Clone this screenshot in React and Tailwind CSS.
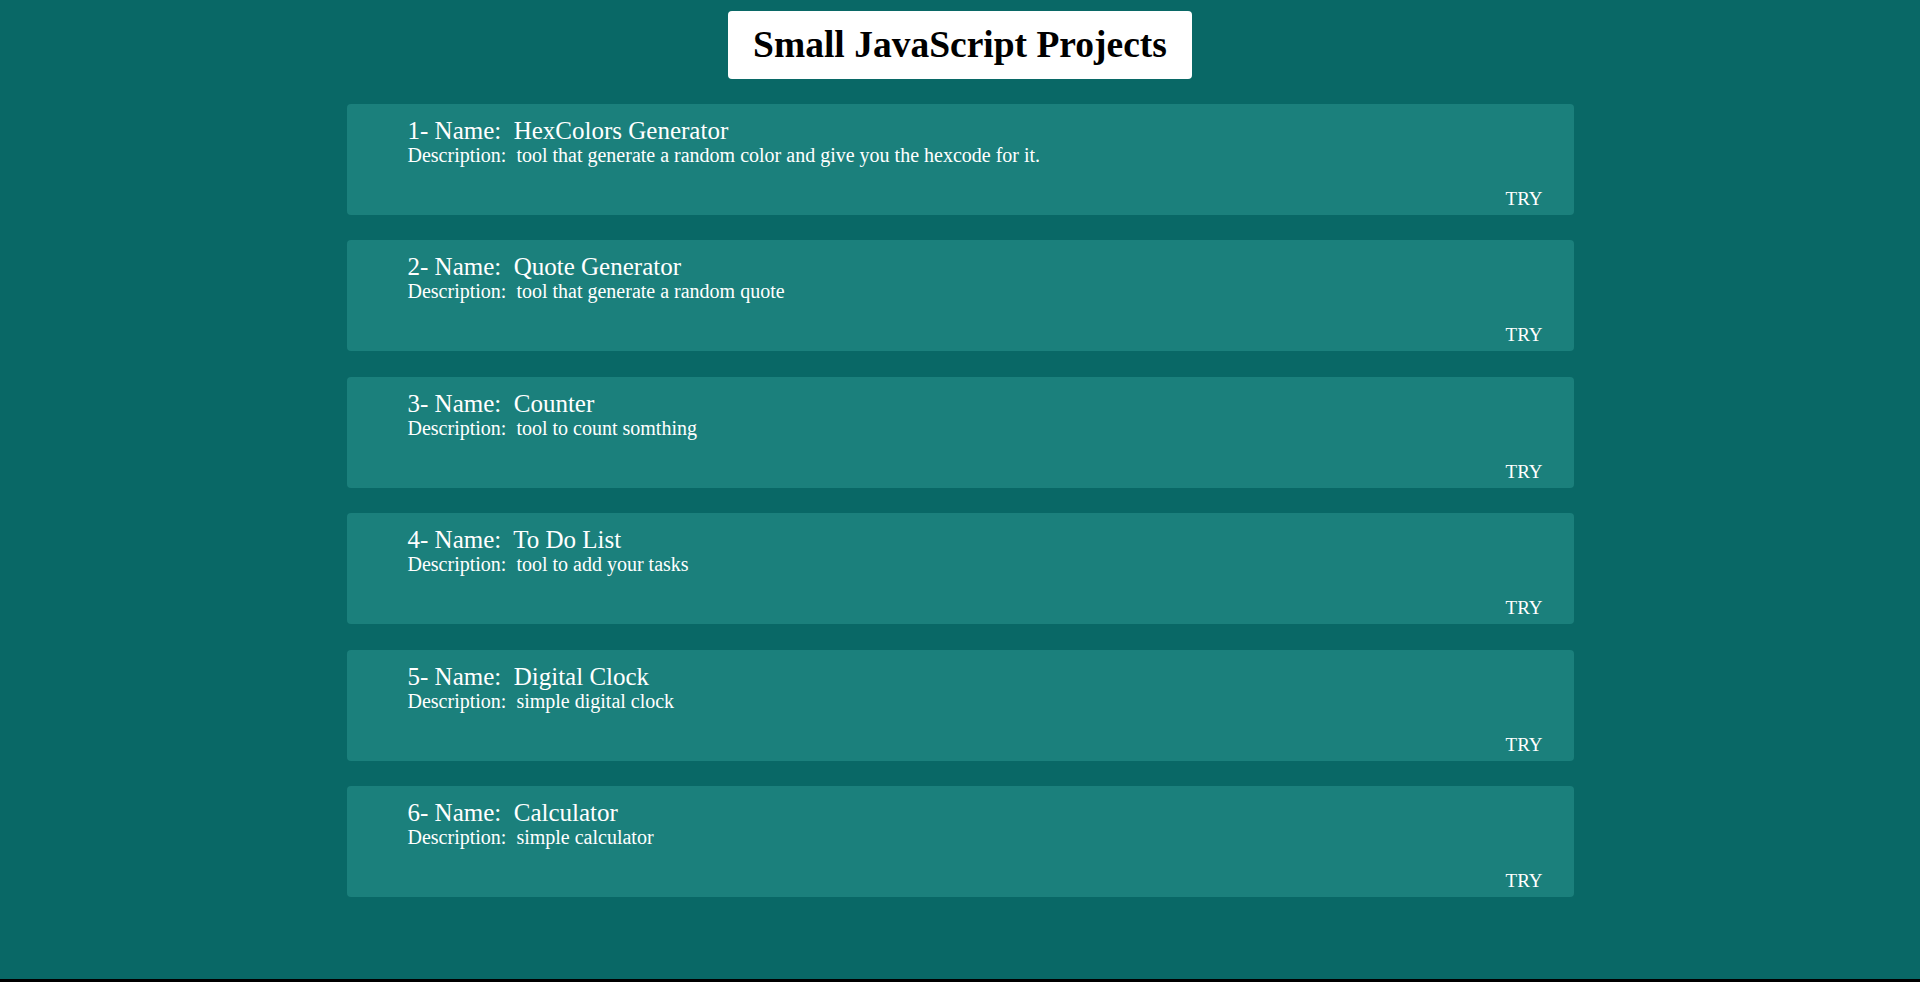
import React from 'react';

const projects = [
  { id: 1, name: 'HexColors Generator', description: 'tool that generate a random color and give you the hexcode for it.' },
  { id: 2, name: 'Quote Generator', description: 'tool that generate a random quote' },
  { id: 3, name: 'Counter', description: 'tool to count somthing' },
  { id: 4, name: 'To Do List', description: 'tool to add your tasks' },
  { id: 5, name: 'Digital Clock', description: 'simple digital clock' },
  { id: 6, name: 'Calculator', description: 'simple calculator' },
];

function ProjectCard({ project }) {
  return (
    <div className="h-[111px] flex flex-col bg-[#1b807c] rounded-[4px] pt-[15px] pl-[61px] pr-[31px] pb-[5px] text-white">
      <p className="text-[25px] leading-[23.5px]">
        {project.id}- Name:&nbsp; {project.name}
      </p>
      <p className="text-[20px] leading-[23px] mt-[1.5px]">
        Description:&nbsp; {project.description}
      </p>
      <a href="#" className="mt-auto self-end text-[19px] leading-[22px]">TRY</a>
    </div>
  );
}

export default function App() {
  return (
    <div
      className="h-[982px] bg-[#096866] border-b-[3px] border-black flex flex-col items-center pt-[11px]"
      style={{ fontFamily: '"Liberation Serif", "Times New Roman", serif' }}
    >
      {/* Header */}
      <div className="w-[464px] h-[68px] bg-white rounded-[4px] flex items-center justify-center">
        <h1 className="text-[37.5px] font-bold text-black leading-none">Small JavaScript Projects</h1>
      </div>

      {/* Project list */}
      <div className="w-[1227px] mt-[25px] flex flex-col gap-[25.4px]">
        {projects.map((p) => (
          <ProjectCard key={p.id} project={p} />
        ))}
      </div>
    </div>
  );
}
